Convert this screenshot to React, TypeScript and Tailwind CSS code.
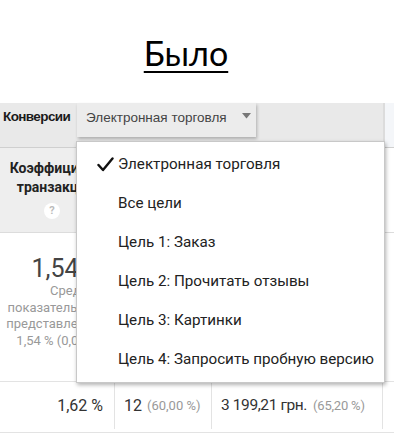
import React from "react";

const roboto = { fontFamily: "Roboto, 'Liberation Sans', sans-serif" };

export default function App() {
  const items = [
    "Электронная торговля",
    "Все цели",
    "Цель 1: Заказ",
    "Цель 2: Прочитать отзывы",
    "Цель 3: Картинки",
    "Цель 4: Запросить пробную версию",
  ];
  return (
    <div className="w-[394px] h-[437px] overflow-hidden bg-white">
      <div className="h-[103px] flex items-start justify-center pr-[22px] pt-[33px]">
        <span className="text-[34px] leading-[40px] text-black underline underline-offset-[5px] decoration-[2px] [font-family:Lato,sans-serif]">
          Было
        </span>
      </div>
      <div className="relative">
        {/* top bar */}
        <div className="flex h-[45px] border-b border-[#cfcfcf]">
          <div className="flex w-[383px] bg-[#e9e9e9]">
            <div className="w-[77px] pl-[3px] pt-[4px] text-[13.5px] font-bold text-[#1a1a1a] [font-family:'Liberation_Sans',Arial,sans-serif] tracking-[-0.6px]">
              Конверсии
            </div>
            <div className="w-[179px] h-[34px] bg-[#ececec] shadow-[1px_2px_3px_rgba(0,0,0,0.25)] flex items-start pl-[9px] pt-[5px] text-[13.5px] text-[#444] [font-family:'Liberation_Sans',Arial,sans-serif]">
              <span>Электронная торговля</span>
              <svg className="ml-[15px] mt-[5px]" width="9" height="6" viewBox="0 0 9 6">
                <path d="M0 0 L9 0 L4.5 5.5 Z" fill="#777" />
              </svg>
            </div>
          </div>
          <div className="w-[2px] bg-[#dcdcdc]" />
          <div className="flex-1 bg-[#f4f6f9]" />
        </div>
        {/* header row */}
        <div className="flex h-[85px] border-b border-[#dcdcdc]" style={roboto}>
          <div className="w-[115px] bg-[#eeeeee] border-r border-[#dcdcdc] flex flex-col items-center pt-[11px] pr-[3px]">
            <div className="text-[14px] font-bold leading-[19px] text-[#222] text-center whitespace-nowrap">
              Коэффициент
              <br />
              транзакций
            </div>
            <div className="mt-[6px] mr-[7px] w-[16px] h-[16px] rounded-full bg-white flex items-center justify-center text-[11px] font-bold text-[#bbb]">
              ?
            </div>
          </div>
          <div className="w-[97px] bg-[#eeeeee] border-r border-[#dcdcdc]" />
          <div className="w-[171px] bg-[#eeeeee] border-r border-[#dcdcdc]" />
          <div className="flex-1 bg-white" />
        </div>
        {/* stats row */}
        <div className="flex h-[149px] border-b border-[#e3e3e3]" style={roboto}>
          <div className="w-[115px] border-r border-[#e3e3e3] flex flex-col items-end pr-[11px] pt-[21px] text-right">
            <div className="text-[25px] leading-[30px] text-[#444] whitespace-nowrap">1,54 %</div>
            <div className="text-[13px] leading-[16.5px] text-[#999] mt-[-1px] whitespace-nowrap text-right">
              Средний
              <br />
              показатель для
              <br />
              представления:
              <br />
              1,54 % (0,00 %)
            </div>
          </div>
          <div className="w-[97px] border-r border-[#e3e3e3]" />
          <div className="w-[171px] border-r border-[#e3e3e3]" />
          <div className="flex-1" />
        </div>
        {/* data row */}
        <div className="flex h-[51px] border-b border-[#e3e3e3] items-stretch pb-[3px]" style={roboto}>
          <div className="w-[115px] border-r border-[#e3e3e3] flex items-center justify-end pr-[11px] text-[16px] text-[#333]">
            1,62 %
          </div>
          <div className="w-[97px] border-r border-[#e3e3e3] flex items-center pl-[9px] text-[16px] text-[#333] whitespace-nowrap">
            12
            <span className="ml-[5px] text-[13px] text-[#999]">(60,00 %)</span>
          </div>
          <div className="w-[171px] border-r border-[#e3e3e3] flex items-center pl-[9px] text-[15.5px] text-[#333] whitespace-nowrap tracking-[-0.4px]">
            3 199,21 грн.
            <span className="ml-[6px] text-[13px] text-[#999] tracking-[-0.2px]">(65,20 %)</span>
          </div>
          <div className="flex-1" />
        </div>

        {/* dropdown menu */}
        <div
          className="absolute left-[76px] top-[38px] w-[309px] h-[242px] bg-white border border-[#c8c8c8] shadow-[1px_2px_4px_rgba(0,0,0,0.3)] pt-[3px]"
          style={roboto}
        >
          {items.map((t, i) => (
            <div key={t} className="h-[39px] flex items-center text-[15.2px] text-[#222] whitespace-nowrap">
              <div className="w-[41px] flex justify-end pr-[4px]">
                {i === 0 && (
                  <svg width="17" height="15" viewBox="0 0 17 15">
                    <path d="M1.5 8 L6 13 L15.5 1.5" fill="none" stroke="#111" strokeWidth="2.4" strokeLinecap="round" strokeLinejoin="round" />
                  </svg>
                )}
              </div>
              <span>{t}</span>
            </div>
          ))}
        </div>
      </div>
    </div>
  );
}
